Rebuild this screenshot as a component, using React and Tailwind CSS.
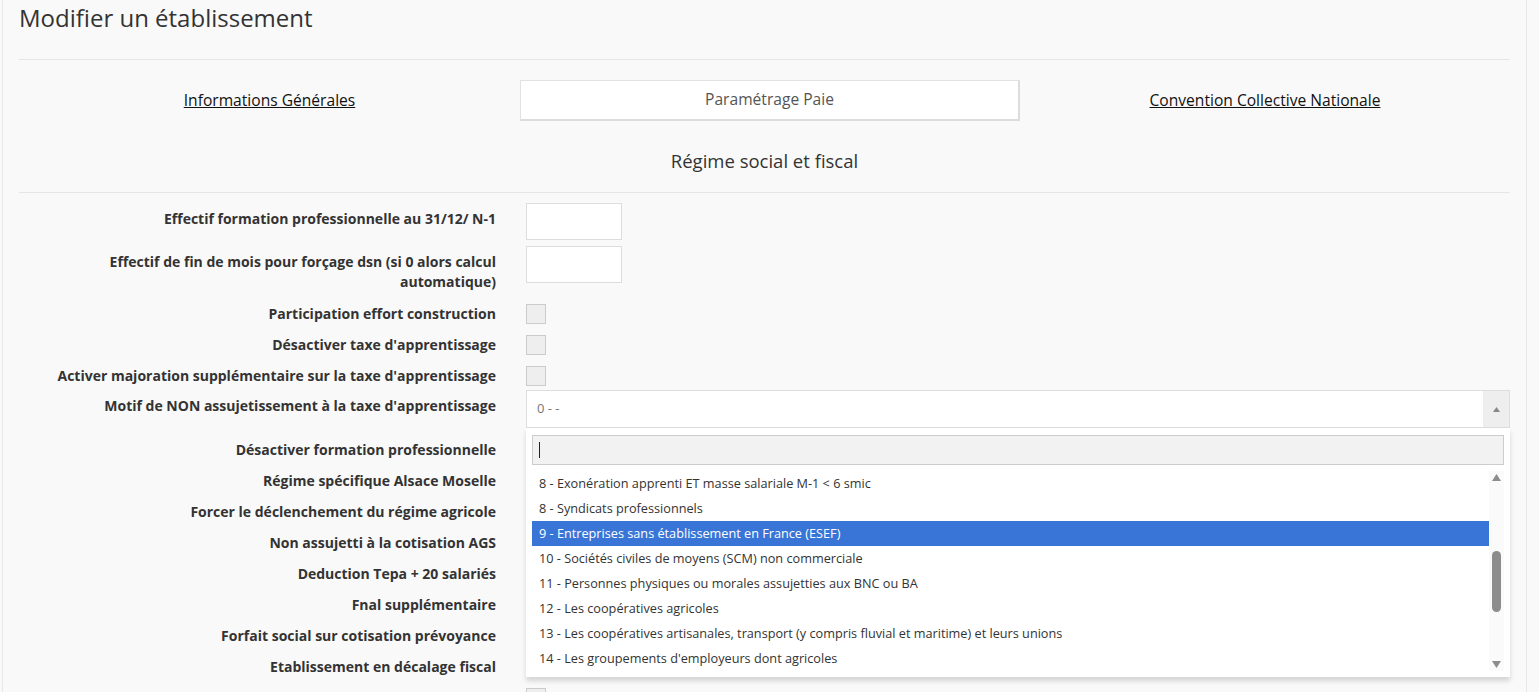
const font = { fontFamily: '"Open Sans", "Noto Sans", sans-serif' }

const beforeSelect = [
  'Participation effort construction',
  "Désactiver taxe d'apprentissage",
  "Activer majoration supplémentaire sur la taxe d'apprentissage",
]

const afterSelect = [
  'Désactiver formation professionnelle',
  'Régime spécifique Alsace Moselle',
  'Forcer le déclenchement du régime agricole',
  'Non assujetti à la cotisation AGS',
  'Deduction Tepa + 20 salariés',
  'Fnal supplémentaire',
  'Forfait social sur cotisation prévoyance',
  'Etablissement en décalage fiscal',
  '',
]

const options = [
  '8 - Exonération apprenti ET masse salariale M-1 < 6 smic',
  '8 - Syndicats professionnels',
  '9 - Entreprises sans établissement en France (ESEF)',
  '10 - Sociétés civiles de moyens (SCM) non commerciale',
  '11 - Personnes physiques ou morales assujetties aux BNC ou BA',
  '12 - Les coopératives agricoles',
  '13 - Les coopératives artisanales, transport (y compris fluvial et maritime) et leurs unions',
  "14 - Les groupements d'employeurs dont agricoles",
]

function Label({ children, className = '' }) {
  return (
    <div className={`w-[477px] shrink-0 text-right text-[14px] font-bold leading-[20px] text-[#333] ${className}`}>
      {children}
    </div>
  )
}

function CheckRow({ label }) {
  return (
    <div className="flex h-[31px] items-center">
      <Label>{label}</Label>
      <div className="ml-[30px] h-[20px] w-[20px] border border-[#ccc] bg-[#eee]" />
    </div>
  )
}

function InputRow({ children }) {
  return (
    <div className="flex">
      <Label className="pt-[6px]">{children}</Label>
      <div className="ml-[30px] h-[37px] w-[96px] border border-[#ddd] bg-white" />
    </div>
  )
}

function Dropdown() {
  return (
    <div className="absolute left-0 right-0 top-[38px] z-10 bg-white px-[6px] pb-[6px] pt-[7px] shadow-[0_4px_5px_rgba(0,0,0,0.15)]">
      <div className="flex h-[30px] items-center border border-[#ccc] bg-[#f2f2f2] px-[6px]">
        <div className="h-[16px] w-px bg-[#222]" />
      </div>
      <div className="mt-[6px] flex">
        <ul className="flex-1 text-[12.7px] text-[#333]">
          {options.map((o, i) => (
            <li
              key={o}
              className={`flex h-[25px] items-center px-[7px] ${i === 2 ? 'bg-[#3875d7] text-white' : ''}`}
            >
              {o}
            </li>
          ))}
        </ul>
        <div className="relative w-[15px] bg-[#fafafa]">
          <svg className="absolute left-[3px] top-[3px]" width="9" height="7" viewBox="0 0 9 7">
            <path d="M4.5 0L9 7H0z" fill="#8c8c8c" />
          </svg>
          <div className="absolute left-[3px] top-[80px] h-[61px] w-[9px] rounded-full bg-[#8c8c8c]" />
          <svg className="absolute bottom-[3px] left-[3px]" width="9" height="7" viewBox="0 0 9 7">
            <path d="M0 0H9L4.5 7z" fill="#8c8c8c" />
          </svg>
        </div>
      </div>
    </div>
  )
}

export default function App() {
  return (
    <div className="h-screen overflow-hidden bg-[#f9f9f9]" style={font}>
      <div className="ml-[2px] h-full w-[1525px] border-x border-[#e8e8e8] px-4">
        <h1 className="pt-[1px] text-[24px] leading-[33px] text-[#333]">Modifier un établissement</h1>
        <hr className="mt-[25px] border-[#e6e6e6]" />

        <div className="mt-[20px] grid grid-cols-[501px_500px_1fr] items-center text-[15.6px]">
          <div className="text-center">
            <a href="#" className="text-[#111] underline">Informations Générales</a>
          </div>
          <div className="flex h-[41px] items-center justify-center border border-[#e2e2e2] border-b-2 border-r-2 border-b-[#dcdcdc] border-r-[#dcdcdc] bg-white text-[#555]">
            Paramétrage Paie
          </div>
          <div className="text-center">
            <a href="#" className="text-[#111] underline">Convention Collective Nationale</a>
          </div>
        </div>

        <h2 className="mt-[27px] text-center text-[18.5px] leading-[26px] text-[#333]">Régime social et fiscal</h2>
        <hr className="mt-[18px] border-[#e6e6e6]" />

        <div className="mt-[10px] flex flex-col">
          <InputRow>Effectif formation professionnelle au 31/12/ N-1</InputRow>
          <div className="mt-[6px]">
            <InputRow>Effectif de fin de mois pour forçage dsn (si 0 alors calcul automatique)</InputRow>
          </div>
          <div className="mt-[6px]">
            {beforeSelect.map((l) => (
              <CheckRow key={l} label={l} />
            ))}
          </div>
          <div className="-mt-px flex">
            <Label className="pt-[6px]">Motif de NON assujetissement à la taxe d'apprentissage</Label>
            <div className="relative ml-[30px] flex-1">
              <div className="flex h-[38px] items-stretch border border-[#ddd] bg-white">
                <div className="flex flex-1 items-center px-[10px] text-[13px] text-[#777]">0 - -</div>
                <div className="flex w-[26px] items-center justify-center bg-[#eee]">
                  <svg width="7" height="5" viewBox="0 0 7 5">
                    <path d="M3.5 0L7 5H0z" fill="#888" />
                  </svg>
                </div>
              </div>
              <Dropdown />
            </div>
          </div>
          <div className="mt-[6px]">
            {afterSelect.map((l, i) => (
              <CheckRow key={i} label={l} />
            ))}
          </div>
        </div>
      </div>
    </div>
  )
}
